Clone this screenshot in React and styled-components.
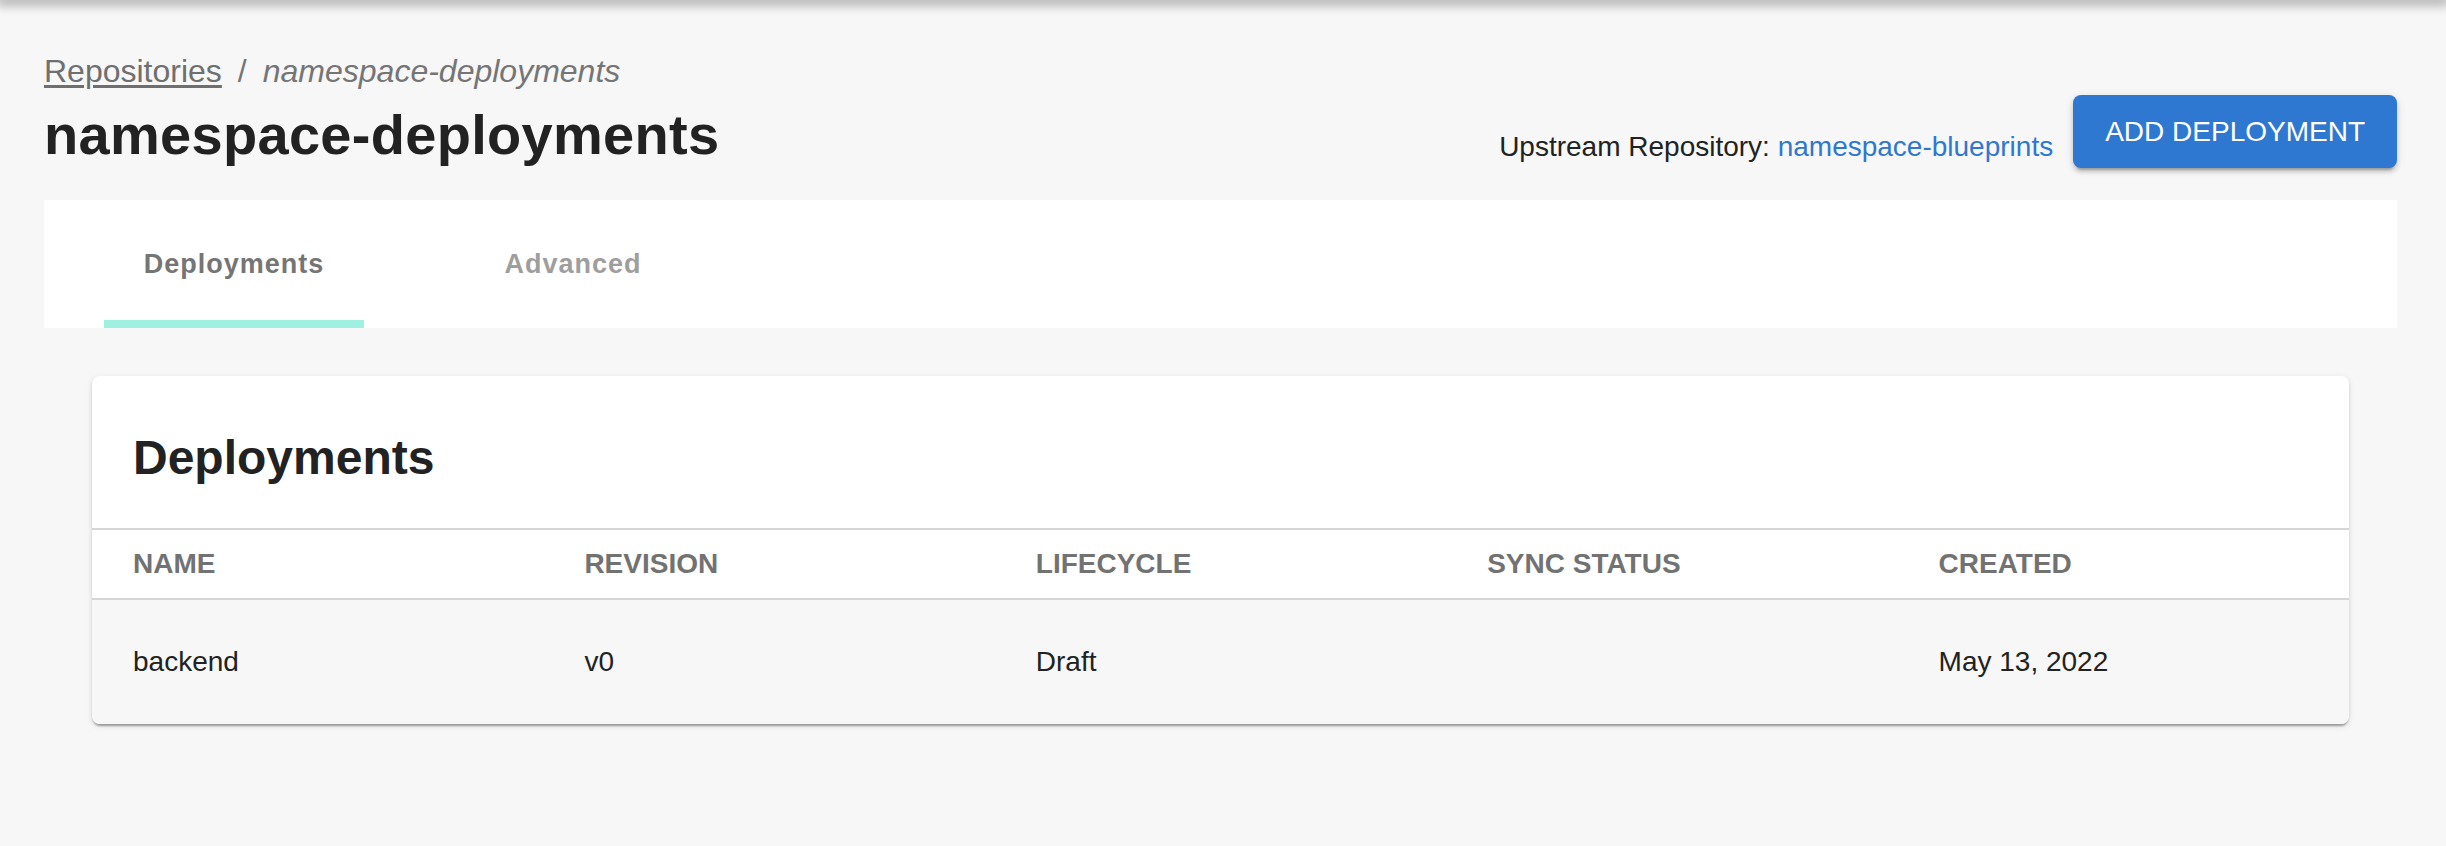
import React from "react";
import styled, { createGlobalStyle } from "styled-components";

const GlobalStyle = createGlobalStyle`
  html, body {
    margin: 0;
    padding: 0;
    background: #f7f7f7;
    font-family: "Liberation Sans", Arial, sans-serif;
    color: #222;
  }
`;

const TopShadow = styled.div`
  height: 0;
  box-shadow: 0 0 12px 4px rgba(0, 0, 0, 0.4);
`;

const Page = styled.div`
  padding: 47px 49px 60px 44px;
`;

const Header = styled.div`
  display: flex;
  justify-content: space-between;
  align-items: flex-end;
  margin-bottom: 32px;
`;

const TitleBlock = styled.div`
  display: flex;
  flex-direction: column;
`;

const Breadcrumbs = styled.nav`
  display: flex;
  align-items: baseline;
  font-size: 32px;
  line-height: 1.5;
  color: #757575;
  margin-bottom: 6px;
`;

const Crumb = styled.a`
  color: #6f6f6f;
  text-decoration: underline;
  text-underline-offset: 3px;
  cursor: pointer;
`;

const Separator = styled.span`
  margin: 0 16px;
  color: #757575;
`;

const Current = styled.span`
  font-style: italic;
  color: #757575;
`;

const Title = styled.h1`
  margin: 0;
  font-size: 56px;
  line-height: 1.2;
  font-weight: 700;
  letter-spacing: 0.3px;
  color: #222;
`;

const Actions = styled.div`
  display: flex;
  align-items: flex-end;
  gap: 20px;
`;

const Upstream = styled.div`
  font-size: 28px;
  line-height: 1.5;
  color: #222;
`;

const Link = styled.a`
  color: #2f78d1;
  text-decoration: none;
  cursor: pointer;
`;

const Button = styled.button`
  height: 73px;
  padding: 0 32px;
  border: none;
  border-radius: 8px;
  background: #2f78d1;
  color: #fff;
  font-family: inherit;
  font-size: 28px;
  font-weight: 500;
  text-transform: uppercase;
  cursor: pointer;
  box-shadow: 0 6px 2px -4px rgba(0, 0, 0, 0.2),
    0 4px 4px 0 rgba(0, 0, 0, 0.14), 0 2px 10px 0 rgba(0, 0, 0, 0.12);
`;

const TabBar = styled.div`
  display: flex;
  gap: 79px;
  height: 128px;
  padding-left: 60px;
  background: #fff;
`;

const Tab = styled.div`
  position: relative;
  width: 260px;
  display: flex;
  align-items: center;
  justify-content: center;
  font-size: 27px;
  font-weight: 700;
  letter-spacing: 1px;
  color: ${(p) => (p.$active ? "#757575" : "#9e9e9e")};
  cursor: pointer;

  &::after {
    content: "";
    position: absolute;
    left: 0;
    right: 0;
    bottom: 0;
    height: 8px;
    background: ${(p) => (p.$active ? "#9ef0e1" : "transparent")};
  }
`;

const Card = styled.section`
  margin: 48px 48px 0;
  background: #fff;
  border-radius: 8px;
  overflow: hidden;
  box-shadow: 0 4px 2px -2px rgba(0, 0, 0, 0.2),
    0 2px 2px 0 rgba(0, 0, 0, 0.14), 0 2px 6px 0 rgba(0, 0, 0, 0.12);
`;

const CardTitle = styled.h2`
  margin: 0;
  padding: 53px 41px 41px;
  font-size: 48px;
  line-height: 1.2;
  font-weight: 700;
  color: #222;
`;

const Table = styled.table`
  width: 100%;
  border-collapse: collapse;
  table-layout: fixed;
`;

const HeadCell = styled.th`
  height: 68px;
  padding: 0 41px;
  text-align: left;
  font-size: 28px;
  font-weight: 700;
  color: #727272;
  border-top: 2px solid #d6d6d6;
  border-bottom: 2px solid #d6d6d6;
`;

const Row = styled.tr`
  background: #f7f7f7;
`;

const Cell = styled.td`
  height: 124px;
  padding: 0 41px;
  font-size: 28px;
  color: #222;
`;

const columns = ["Name", "Revision", "Lifecycle", "Sync Status", "Created"];

const deployments = [
  {
    name: "backend",
    revision: "v0",
    lifecycle: "Draft",
    sync: "",
    created: "May 13, 2022",
  },
];

export default function App() {
  return (
    <>
      <GlobalStyle />
      <TopShadow />
      <Page>
        <Header>
          <TitleBlock>
            <Breadcrumbs>
              <Crumb>Repositories</Crumb>
              <Separator>/</Separator>
              <Current>namespace-deployments</Current>
            </Breadcrumbs>
            <Title>namespace-deployments</Title>
          </TitleBlock>
          <Actions>
            <Upstream>
              Upstream Repository: <Link>namespace-blueprints</Link>
            </Upstream>
            <Button>Add Deployment</Button>
          </Actions>
        </Header>

        <TabBar>
          <Tab $active>Deployments</Tab>
          <Tab>Advanced</Tab>
        </TabBar>

        <Card>
          <CardTitle>Deployments</CardTitle>
          <Table>
            <thead>
              <tr>
                {columns.map((c) => (
                  <HeadCell key={c}>{c.toUpperCase()}</HeadCell>
                ))}
              </tr>
            </thead>
            <tbody>
              {deployments.map((d) => (
                <Row key={d.name}>
                  <Cell>{d.name}</Cell>
                  <Cell>{d.revision}</Cell>
                  <Cell>{d.lifecycle}</Cell>
                  <Cell>{d.sync}</Cell>
                  <Cell>{d.created}</Cell>
                </Row>
              ))}
            </tbody>
          </Table>
        </Card>
      </Page>
    </>
  );
}
